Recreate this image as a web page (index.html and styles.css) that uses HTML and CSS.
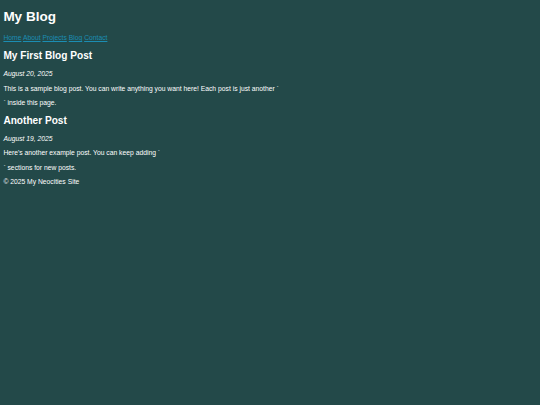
FILE: index.html
```html
<!DOCTYPE html>
<html lang="en">
<head>
<meta charset="utf-8">
<title>My Blog</title>
<link rel="stylesheet" href="styles.css">
</head>
<body>
<header class="site-header">
  <h1 class="site-title">My Blog</h1>
  <nav class="site-nav">
    <a href="#">Home</a>
    <a href="#">About</a>
    <a href="#">Projects</a>
    <a href="#">Blog</a>
    <a href="#">Contact</a>
  </nav>
</header>
<main>
  <article class="post">
    <h2 class="post-title">My First Blog Post</h2>
    <p class="post-date">August 20, 2025</p>
    <p class="post-text">This is a sample blog post. You can write anything you want here! Each post is just another `</p>
    <p class="post-text">` inside this page.</p>
  </article>
  <article class="post">
    <h2 class="post-title">Another Post</h2>
    <p class="post-date">August 19, 2025</p>
    <p class="post-text">Here's another example post. You can keep adding `</p>
    <p class="post-text">` sections for new posts.</p>
  </article>
</main>
<footer class="site-footer">
  <p class="footer-text">© 2025 My Neocities Site</p>
</footer>
</body>
</html>
```

FILE: styles.css
```css
html {
  background: #234949;
}
body {
  margin: 0;
  padding: 0 3.375px;
  font-family: "Liberation Sans", Arial, sans-serif;
  font-size: 6.75px;
  color: #ffffff;
}
.site-title {
  font-size: 13.5px;
  font-weight: bold;
  margin: 9px 0 10px;
}
.site-nav a {
  color: #1b8db3;
  text-decoration: underline;
}
.post-title {
  font-size: 10.125px;
  font-weight: bold;
  margin: 9.4px 0 9px;
}
.post-date {
  font-style: italic;
  margin: 7.2px 0;
}
.post-text {
  margin: 7.2px 0;
}
.footer-text {
  margin: 7.2px 0;
}
```
